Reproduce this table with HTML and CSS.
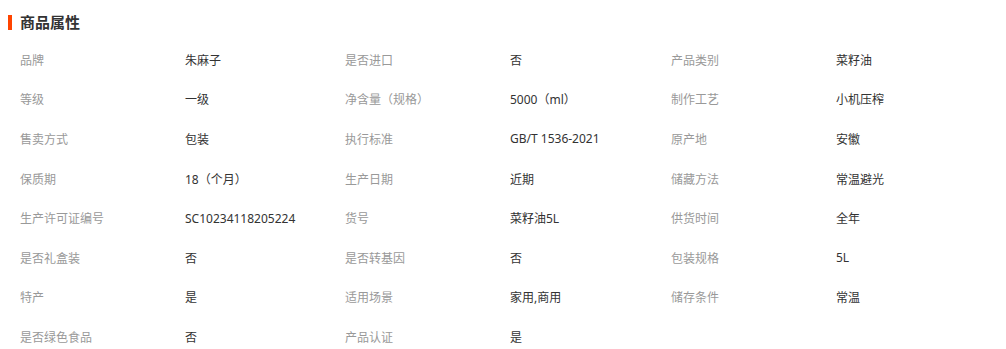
FILE: index.html
```html
<!DOCTYPE html>
<html lang="zh-CN">
<head>
<meta charset="utf-8">
<title>商品属性</title>
<link rel="stylesheet" href="styles.css">
</head>
<body>
<div class="attrs">
  <h2 class="attrs-title">商品属性</h2>
  <div class="attrs-grid">
    <span class="k">品牌</span><span class="v">朱麻子</span>
    <span class="k">是否进口</span><span class="v">否</span>
    <span class="k">产品类别</span><span class="v">菜籽油</span>

    <span class="k">等级</span><span class="v">一级</span>
    <span class="k">净含量（规格）</span><span class="v">5000（ml）</span>
    <span class="k">制作工艺</span><span class="v">小机压榨</span>

    <span class="k">售卖方式</span><span class="v">包装</span>
    <span class="k">执行标准</span><span class="v">GB/T 1536-2021</span>
    <span class="k">原产地</span><span class="v">安徽</span>

    <span class="k">保质期</span><span class="v">18（个月）</span>
    <span class="k">生产日期</span><span class="v">近期</span>
    <span class="k">储藏方法</span><span class="v">常温避光</span>

    <span class="k">生产许可证编号</span><span class="v">SC10234118205224</span>
    <span class="k">货号</span><span class="v">菜籽油5L</span>
    <span class="k">供货时间</span><span class="v">全年</span>

    <span class="k">是否礼盒装</span><span class="v">否</span>
    <span class="k">是否转基因</span><span class="v">否</span>
    <span class="k">包装规格</span><span class="v">5L</span>

    <span class="k">特产</span><span class="v">是</span>
    <span class="k">适用场景</span><span class="v">家用,商用</span>
    <span class="k">储存条件</span><span class="v">常温</span>

    <span class="k">是否绿色食品</span><span class="v">否</span>
    <span class="k">产品认证</span><span class="v">是</span>
  </div>
</div>
</body>
</html>
```
FILE: styles.css
```css
html, body {
  margin: 0;
  padding: 0;
  background: #fff;
}
body {
  font-family: "Noto Sans", "Noto Sans CJK SC", sans-serif;
  font-size: 12px;
  color: #333;
}
.attrs {
  padding-top: 12px;
}
.attrs-title {
  margin: 0 0 8px 8px;
  padding-left: 8px;
  border-left: 4px solid #ff4400;
  height: 15px;
  line-height: 15px;
  margin-top: 3px;
  margin-bottom: 10px;
  font-size: 15px;
  font-weight: bold;
  color: #333;
  box-sizing: content-box;
}
.attrs-grid {
  display: grid;
  grid-template-columns: 165px 160px 165px 161px 165px 1fr;
  grid-auto-rows: 39.6px;
  align-items: center;
  padding-left: 20px;
}
.k {
  color: #999;
}
.v {
  color: #333;
}
```
